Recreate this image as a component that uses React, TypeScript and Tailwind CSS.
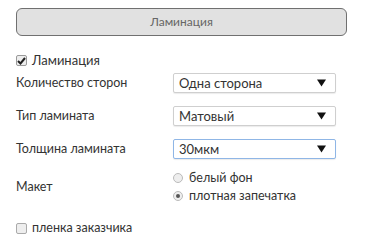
import React from "react";

function Arrow() {
  return (
    <svg width="9" height="8" viewBox="0 0 9 8" className="shrink-0">
      <path d="M0 0.5 H9 L4.5 7.5 Z" fill="#111" />
    </svg>
  );
}

function Select({ value, focused }: { value: string; focused?: boolean }) {
  return (
    <div
      className={
        "flex h-[20px] w-[163px] items-center justify-between rounded-[2px] border bg-white pl-[5px] pr-[9px] text-[13px] text-[#333] shadow-[0_1px_1px_rgba(0,0,0,0.08)] " +
        (focused ? "border-[#8fb6e6]" : "border-[#cfcfcf]")
      }
    >
      <span className="leading-none">{value}</span>
      <Arrow />
    </div>
  );
}

function Row({ label, children }: { label: string; children: React.ReactNode }) {
  return (
    <div className="flex items-center">
      <div className="w-[157px] text-[12.5px] text-[#333]">{label}</div>
      {children}
    </div>
  );
}

export default function App() {
  return (
    <div
      className="h-[245px] w-[366px] bg-white px-4 pt-2"
      style={{ fontFamily: 'Lato, "Open Sans", sans-serif' }}
    >
      <div className="flex h-[28px] w-[331px] items-center justify-center rounded-[6px] border border-[#707070] bg-[#e1e1e1] text-[12px] text-[#666]">
        Ламинация
      </div>

      <div className="mt-[18px] flex items-center gap-[5px] text-[13px] text-[#333]">
        <span className="flex h-[11px] w-[11px] items-center justify-center rounded-[2px] border border-[#9a9a9a] bg-[#eee]">
          <svg width="9" height="8" viewBox="0 0 9 8">
            <path d="M1 4 L3.5 6.5 L8 1" stroke="#222" strokeWidth="2" fill="none" />
          </svg>
        </span>
        <span className="leading-none">Ламинация</span>
      </div>

      <div className="mt-[6px] flex flex-col gap-[13px]">
        <Row label="Количество сторон">
          <Select value="Одна сторона" />
        </Row>
        <Row label="Тип ламината">
          <Select value="Матовый" />
        </Row>
        <Row label="Толщина ламината">
          <Select value="30мкм" focused />
        </Row>
      </div>

      <div className="mt-[12px] flex items-center">
        <div className="w-[157px] text-[12.5px] text-[#333]">Макет</div>
        <div className="flex flex-col gap-[4px] text-[12.5px] text-[#333]">
          <div className="flex items-center gap-[6px]">
            <span className="h-[10px] w-[10px] rounded-full border border-[#bbb] bg-[#eee]" />
            <span className="leading-[14px]">белый фон</span>
          </div>
          <div className="flex items-center gap-[6px]">
            <span className="flex h-[10px] w-[10px] items-center justify-center rounded-full border border-[#bbb] bg-[#eee]">
              <span className="h-[4px] w-[4px] rounded-full bg-[#555]" />
            </span>
            <span className="leading-[14px]">плотная запечатка</span>
          </div>
        </div>
      </div>

      <div className="mt-[19px] flex items-center gap-[5px] text-[12.5px] text-[#333]">
        <span className="h-[11px] w-[11px] rounded-[2px] border border-[#aaa] bg-[#eee]" />
        <span className="leading-none">пленка заказчика</span>
      </div>
    </div>
  );
}
